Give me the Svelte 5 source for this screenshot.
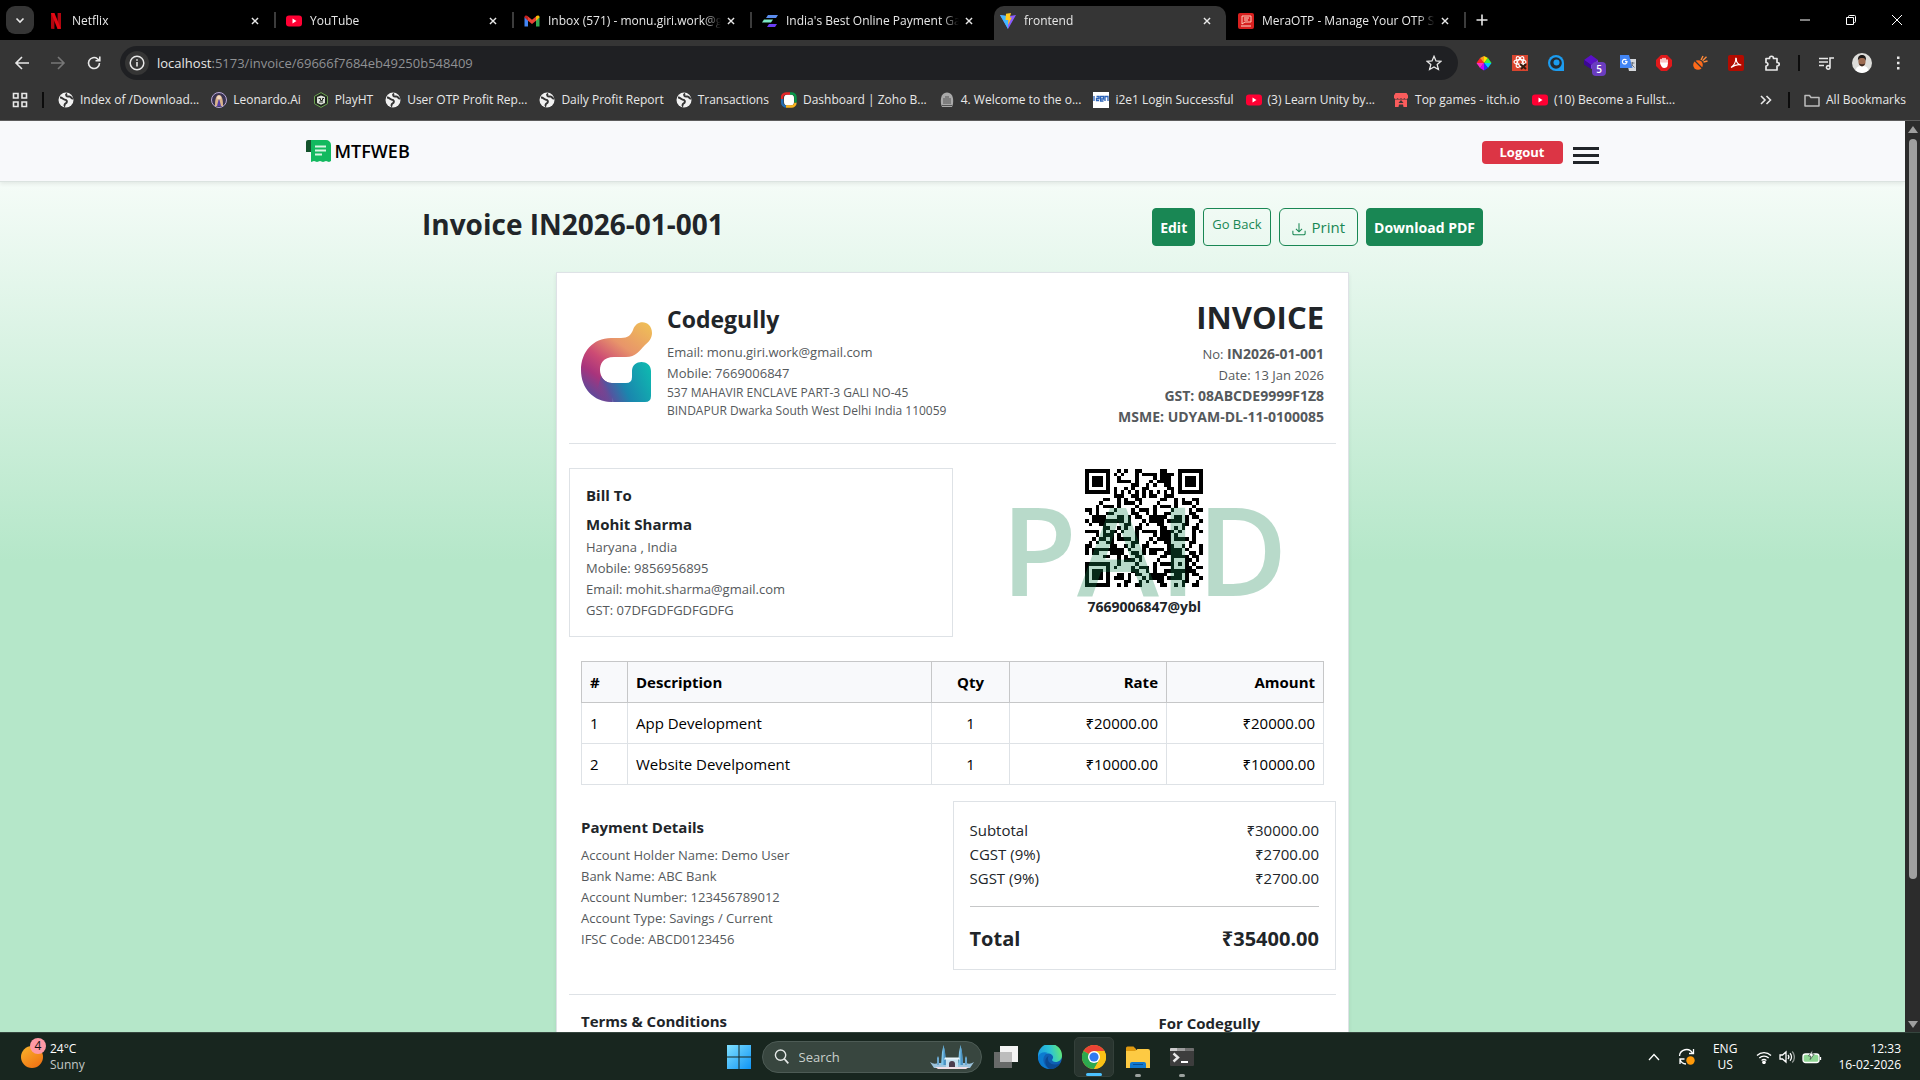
<script>
  const tabs = [
    { icon: 'netflix', title: 'Netflix' },
    { icon: 'youtube', title: 'YouTube' },
    { icon: 'gmail', title: 'Inbox (571) - monu.giri.work@gmail.com' },
    { icon: 'bars', title: "India's Best Online Payment Gateway" },
    { icon: 'vite', title: 'frontend', active: true },
    { icon: 'otp', title: 'MeraOTP - Manage Your OTP Services' },
  ];

  const bookmarks = [
    { icon: 'globe', title: 'Index of /Download...' },
    { icon: 'leonardo', title: 'Leonardo.Ai' },
    { icon: 'playht', title: 'PlayHT' },
    { icon: 'globe', title: 'User OTP Profit Rep...' },
    { icon: 'globe', title: 'Daily Profit Report' },
    { icon: 'globe', title: 'Transactions' },
    { icon: 'zoho', title: 'Dashboard | Zoho B...' },
    { icon: 'emblem', title: '4. Welcome to the o...' },
    { icon: 'i2e1', title: 'i2e1 Login Successful' },
    { icon: 'youtube', title: '(3) Learn Unity by...', wide: true },
    { icon: 'itch', title: 'Top games - itch.io' },
    { icon: 'youtube', title: '(10) Become a Fullst...' },
  ];

  const extensions = ['wheel', 'react', 'swirl', 'cube', 'translate', 'stop', 'plug', 'pdf', 'puzzle'];

  const items = [
    { name: 'App Development', qty: 1, rate: 20000 },
    { name: 'Website Develpoment', qty: 1, rate: 10000 },
  ];
  const money = (n) => '₹' + n.toFixed(2);
  const subtotal = items.reduce((sum, i) => sum + i.qty * i.rate, 0);
  const tax = subtotal * 0.09;

  const size = 33;
  // Position markers, alignment marker and timing tracks of a version 4 code; -1 marks the data area.
  function fixedModule(x, y) {
    const spots = [[0, 0], [size - 7, 0], [0, size - 7]];
    for (const [fx, fy] of spots) {
      const dx = x - fx, dy = y - fy;
      if (dx >= -1 && dx <= 7 && dy >= -1 && dy <= 7) {
        if (dx < 0 || dx > 6 || dy < 0 || dy > 6) return 0;
        const ring = Math.max(Math.abs(dx - 3), Math.abs(dy - 3));
        return ring === 2 ? 0 : 1;
      }
    }
    const align = Math.max(Math.abs(x - 26), Math.abs(y - 26));
    if (align <= 2) return align === 1 ? 0 : 1;
    if (x === 6 || y === 6) return (x + y + 1) % 2;
    return -1;
  }
  let qrPath = '';
  for (let y = 0; y < size; y++)
    for (let x = 0; x < size; x++) {
      const f = fixedModule(x, y);
      const v = f >= 0 ? f : ((x * 7919 + y * 104729 + x * y * 31 + ((x * x * 13 + y * y * 17) >> 2)) >> 2) & 1;
      if (v) qrPath += `M${x} ${y}h1v1h-1z`;
    }
</script>

{#snippet icon(name)}
  <svg class="ico" viewBox="0 0 16 16" aria-hidden="true">
    {#if name === 'netflix'}
      <path d="M3 0h3.4v16L3 15.8zM9.6 0H13v15.800L9.600 16z" fill="#b1060f" />
      <path d="M3 0h3.400L13 15.800 9.600 16z" fill="#e50914" />
    {:else if name === 'youtube'}
      <rect y="2.500" width="16" height="11" rx="3" fill="#f03" />
      <path d="M6.500 5.500v5L10.500 8z" fill="#fff" />
    {:else if name === 'gmail'}
      <path d="M.5 4v9.500H4V7z" fill="#4285f4" />
      <path d="M12 7v6.500h3.500V4z" fill="#34a853" />
      <path d="M4 3.500v4.300L8 11l4-3.200V3.500L8 6.800z" fill="#ea4335" />
      <path d="M.5 4.500V4C.5 2.500 2.500 2 4 3.300v4.500z" fill="#c5221f" />
      <path d="M15.500 4.500V4c0-1.500-2-2-3.500-.7v4.500z" fill="#fbbc04" />
    {:else if name === 'bars'}
      <path d="M6 2h10l-2 3H4z" fill="#5b8def" />
      <path d="M2 6.500h9l-2 3H0z" fill="#7ce8c4" />
      <path d="M7 11h8l-2 3H5z" fill="#6a3df5" />
    {:else if name === 'vite'}
      <path d="M0 2l8 14 8-14-6 1H6z" fill="#8a5cff" />
      <path d="M0 2l8 14V3z" fill="#41b8ff" />
      <path d="M6 .8L11 0 9.800 4.500h2L8 12l.3-5H5.500z" fill="#ffc81e" />
    {:else if name === 'otp'}
      <rect width="16" height="16" rx="2" fill="#d8201f" />
      <path d="M4 3h9v6H7l-3 2z" fill="none" stroke="#ffc9b8" />
      <path d="M6 5h5M6 7h4M3 13h10" stroke="#ffd9cc" />
    {:else if name === 'globe'}
      <circle cx="8" cy="8" r="7.500" fill="#f1f1f1" />
      <path d="M2 5.500c3 0 3 2.500 6 2.500 1.500 1 1 3-.5 3.500S7 14 6 14.500M9 1.500C7 3 8.500 5 11 4.500s2 2.500 4 2" fill="none" stroke="#353535" stroke-width="2" />
    {:else if name === 'leonardo'}
      <circle cx="8" cy="8" r="7.500" fill="#3a3350" stroke="#b9a7d8" />
      <path d="M4 14c0-7 1-11 4-11s4 4 4 11z" fill="#d9b48c" />
      <path d="M6 14l2-8 2 8z" fill="#5a3fa8" />
      <circle cx="8" cy="5.500" r="2" fill="#f3d9c0" />
    {:else if name === 'playht'}
      <path d="M8 .6l6.500 3.700v7.400L8 15.400 1.500 11.700V4.300z" fill="#20261f" stroke="#6ea553" />
      <path d="M4 5l4-1.500L12 5v6l-4 1.800L4 11z" fill="#d9ddd6" />
      <path d="M5.500 6.500h2v2h2v-2h1.500M6 10h4" stroke="#20261f" fill="none" />
    {:else if name === 'zoho'}
      <rect x="3" y="2.500" width="10" height="11" rx="3.500" fill="#fff" />
      <path d="M9 1.500H5a4 4 0 0 0-4 4V7" fill="none" stroke="#e42527" stroke-width="2.400" />
      <path d="M1.200 7v3.500a4 4 0 0 0 3.800 4" fill="none" stroke="#226db4" stroke-width="2.400" />
      <path d="M5 14.500h5a4 4 0 0 0 4.500-4" fill="none" stroke="#f9b21d" stroke-width="2.400" />
      <path d="M9 1.500h2a3.500 3.500 0 0 1 3.500 4v5" fill="none" stroke="#089949" stroke-width="2.400" />
    {:else if name === 'emblem'}
      <path d="M2 12C1 4 4 .5 8 .5S15 4 14 12l-1 3H3z" fill="#a9a9a9" />
      <path d="M5 12V6m2 6V4m2 8V4m2 8V6M3 13.500h10" stroke="#555" />
    {:else if name === 'i2e1'}
      <path d="M0 0h16v16H0z" fill="#fff" />
      <path d="M1 4v5M3.500 4.500h2.500v2H3.500v2H6M7.500 7h3V4.500h-3V9h3M12 9V4.500h3V9" fill="none" stroke="#2a62b8" stroke-width="1.300" />
    {:else if name === 'itch'}
      <path d="M1 3.500L2.500 1h11L15 3.500V6c-1 1.500-3 1.200-3.500 0-.8 1.400-2.800 1.400-3.500 0-.7 1.400-2.700 1.400-3.500 0C4 7.200 2 7.500 1 6z" fill="#fa5c5c" />
      <path d="M2 7.500h12V15h-3.500L10 12.500H6L5.500 15H2z" fill="#fa5c5c" />
      <path d="M8 8l2.500 3h-5z" fill="#353535" />
    {:else if name === 'wheel'}
      <path d="M8 8V1l4 2z" fill="#ffe600" /><path d="M8 8l4-5 3.500 5z" fill="#3df03d" />
      <path d="M8 8h7.500L12 13z" fill="#00c8ff" /><path d="M8 8l4 5-4 2.500z" fill="#2430ff" />
      <path d="M8 8v7.500L4 13z" fill="#c800ff" /><path d="M8 8l-4 5L.5 8z" fill="#ff2ac8" />
      <path d="M8 8H.5L4 3z" fill="#ff2626" /><path d="M8 8L4 3l4-2z" fill="#ff9a1f" />
    {:else if name === 'react'}
      <path d="M0 0h16v16H0z" fill="#d9452f" />
      <g fill="none" stroke="#fff" stroke-width="1.200"><ellipse cx="8" cy="7" rx="6" ry="2.400" /><ellipse cx="8" cy="7" rx="6" ry="2.400" transform="rotate(60 8 7)" /><ellipse cx="8" cy="7" rx="6" ry="2.400" transform="rotate(120 8 7)" /></g>
      <path d="M8 9l6 5M9 14l5-5" stroke="#30190f" stroke-width="2" />
    {:else if name === 'swirl'}
      <path d="M8 0a8 8 0 1 0 0 16h8V8a8 8 0 0 0-8-8z" fill="#1c9cf0" />
      <circle cx="8" cy="8" r="5.800" fill="#262a30" />
      <circle cx="8.500" cy="7.500" r="3" fill="#1c9cf0" />
    {:else if name === 'cube'}
      <path d="M7 0l7 5-7 5-7-5z" fill="#5a10c8" /><path d="M0 5l7 5v4L0 9.500z" fill="#3b0794" /><path d="M14 5l-7 5v4l7-4z" fill="#7a3ae0" />
    {:else if name === 'translate'}
      <path d="M6 4h10v12H9z" fill="#d5d8dc" />
      <path d="M0 0h9l3.500 13H0z" fill="#4285f4" />
      <path d="M6.500 5.200A2.300 2.300 0 1 0 7 6.700H5" fill="none" stroke="#fff" stroke-width="1.200" />
      <path d="M10.500 8h4M12.500 7v1c0 2-1 3.500-2 4M11.500 9.500l3 3" stroke="#6b7480" fill="none" />
    {:else if name === 'stop'}
      <path d="M5 0h6l5 5v6l-5 5H5l-5-5V5z" fill="#e0191b" />
      <path d="M5 8V4.500m2 3v-4m2 4v-4m2 5V5" stroke="#fff" stroke-width="1.500" stroke-linecap="round" />
      <path d="M4.300 7.500h7.400V10c0 2-1.500 3-3.500 3S5.500 11.500 4.300 9z" fill="#fff" />
    {:else if name === 'plug'}
      <circle cx="6" cy="10" r="4.800" fill="#ff6a1a" />
      <path d="M2 5l9 9" stroke="#353535" stroke-width="1.300" />
      <path d="M9 5l2-4M11.500 7l4-1M10.500 5.800l4-4" stroke="#ff8a3a" stroke-width="1.400" />
    {:else if name === 'pdf'}
      <rect width="16" height="16" rx="2" fill="#b30b00" />
      <path d="M3 12.500c3-2 5-6 4.700-8.500-.2-1.500 1-1 .7.500-.4 3 2.600 5.500 4.800 5.500-2.500-.8-6.500 0-10.200 2.500z" fill="none" stroke="#fff" stroke-width="1.100" />
    {:else if name === 'puzzle'}
      <path d="M2 3.500h3.500c0-3 4-3 4 0H13v4c3 0 3 3.500 0 3.500v4H2v-4c2.500 0 2.500-3.500 0-3.500z" fill="none" stroke="#e8e8e8" stroke-width="1.700" stroke-linejoin="round" />
    {/if}
  </svg>
{/snippet}

{#snippet stroke(d)}
  <svg class="ico" viewBox="0 0 16 16" aria-hidden="true"><path {d} fill="none" stroke="currentColor" stroke-width="1.600" /></svg>
{/snippet}

<div class="desktop">
  <header class="browser">
    <div class="tabstrip">
      <button class="tabsearch" aria-label="Search tabs">{@render stroke('M4.500 6.500L8 10l3.500-3.500')}</button>
      {#each tabs as tab}
        <div class="tab" class:active={tab.active}>
          {@render icon(tab.icon)}
          <span class="title">{tab.title}</span>
          <button class="x" aria-label="Close tab">{@render stroke('M4.500 4.500l7 7M11.500 4.500l-7 7')}</button>
        </div>
      {/each}
      <button class="newtab" aria-label="New tab">{@render stroke('M8 2.500v11M2.500 8h11')}</button>
      <div class="winctl">
        <button aria-label="Minimize"><svg viewBox="0 0 10 10"><path d="M0 5h10" /></svg></button>
        <button aria-label="Restore"><svg viewBox="0 0 10 10"><path d="M.5 2.500h7v7h-7zM2.500 2.500V1.500a1 1 0 0 1 1-1h5a1 1 0 0 1 1 1v5a1 1 0 0 1-1 1h-1" /></svg></button>
        <button aria-label="Close"><svg viewBox="0 0 10 10"><path d="M0 0l10 10M10 0L0 10" /></svg></button>
      </div>
    </div>

    <div class="toolbar">
      <button class="nav" aria-label="Back">{@render stroke('M15 8H2.500M8 2L2 8l6 6')}</button>
      <button class="nav dim" aria-label="Forward">{@render stroke('M1 8h12.500M8 2l6 6-6 6')}</button>
      <button class="nav" aria-label="Reload">{@render stroke('M13.500 8A5.500 5.500 0 1 1 11.500 3.800L13.500 5.500M13.800 1.500v4.300H9.500')}</button>
      <div class="omnibox">
        <button class="info" aria-label="Site information">
          <svg class="ico" viewBox="0 0 16 16"><circle cx="8" cy="8" r="6.800" fill="none" stroke="currentColor" stroke-width="1.500" /><path d="M8 7v4.500M8 4.200v1.600" stroke="currentColor" stroke-width="1.600" /></svg>
        </button>
        <span class="url"><b>localhost</b>:5173/invoice/69666f7684eb49250b548409</span>
        <button class="nav" aria-label="Bookmark"><svg class="ico" viewBox="0 0 16 16"><path d="M8 1.300l2 4.600 5 .4-3.800 3.300 1.200 4.900L8 11.900l-4.400 2.600 1.200-4.900L1 6.300l5-.4z" fill="none" stroke="currentColor" stroke-width="1.300" /></svg></button>
      </div>
      <div class="exts">
        {#each extensions as ext}
          <button class="ext" aria-label={ext}>{@render icon(ext)}{#if ext === 'cube'}<span class="badge">5</span>{/if}</button>
        {/each}
      </div>
      <span class="sep"></span>
      <button class="ext" aria-label="Media">{@render stroke('M1 3.500h9M1 7h9M1 10.500h5M12 12V3h4M12 12a1.800 1.800 0 1 1-3.500 0 1.800 1.800 0 0 1 3.500 0z')}</button>
      <button class="ext avatar" aria-label="Profile">
        <svg viewBox="0 0 20 20"><circle cx="10" cy="10" r="10" fill="#dcdcd9" /><path d="M3.500 17.500C4.500 13.500 7 13 10 13s5.500.5 6.500 4.500A10 10 0 0 1 3.500 17.500z" fill="#fff" /><ellipse cx="10" cy="8.500" rx="3.600" ry="5" fill="#9c6a50" /><path d="M6 8C5.500 3.500 7.500 2 10 2s4.500 1.500 4 6c-1-3-2-3-4-3s-3 0-4 3z" fill="#1f1a18" /><path d="M7 10.500c1 3.500 5 3.500 6 0-1 1-5 1-6 0z" fill="#3a2a22" /></svg>
      </button>
      <button class="ext" aria-label="Menu"><svg class="ico" viewBox="0 0 16 16"><path d="M7 1.500h2.500V4H7zM7 6.800h2.500v2.500H7zM7 12h2.500v2.500H7z" fill="currentColor" /></svg></button>
    </div>

    <nav class="bookmarks">
      <button class="apps" aria-label="Apps">{@render stroke('M1.500 1.500h4.500v4.500H1.500zM10 1.500h4.500v4.500H10zM1.500 10h4.500v4.500H1.500zM10 10h4.500v4.500H10z')}</button>
      <span class="sep"></span>
      {#each bookmarks as mark}
        <a href="#top" class:wide={mark.wide}>{@render icon(mark.icon)}{mark.title}</a>
      {/each}
      <span class="grow"></span>
      <button class="apps" aria-label="More bookmarks">{@render stroke('M3 4l4 4-4 4M8.500 4l4 4-4 4')}</button>
      <span class="sep"></span>
      <a href="#top" class="all">
        <svg class="ico" viewBox="0 0 16 16"><path d="M1 3.500h4.500l1.500 2h8V14H1z" fill="none" stroke="#bdbdbd" stroke-width="1.500" stroke-linejoin="round" /></svg>All Bookmarks
      </a>
    </nav>
  </header>

  <div class="viewport">
    <div class="page">
      <nav class="sitebar">
        <div class="container">
          <a class="brand" href="#home">
            <svg viewBox="0 0 25 22" aria-hidden="true"><path d="M0 2a2 2 0 0 1 2-2h5v12H0z" fill="#14532d" /><path d="M5 0h15a5 5 0 0 1 5 5v16l-2 1-3-1-3 1-3-1-3 1-3-1-3 1z" fill="#12b95f" /><path d="M9 6.500h11M9 10.500h11M9 14.500h7" stroke="#d7f5e3" stroke-width="2" /></svg>
            MTFWEB
          </a>
          <button class="logout">Logout</button>
          <button class="burger" aria-label="Menu"><i></i><i></i><i></i></button>
        </div>
      </nav>

      <main>
        <div class="titlebar">
          <h1>Invoice IN2026-01-001</h1>
          <div class="actions">
            <button class="btn solid">Edit</button>
            <button class="btn back">Go Back</button>
            <button class="btn print">
              <svg viewBox="0 0 16 16" aria-hidden="true"><path d="M1 10v3a1.500 1.500 0 0 0 1.500 1.500h11A1.500 1.500 0 0 0 15 13v-3M8 1.500V11M4.500 7.800L8 11.200l3.500-3.400" fill="none" stroke="currentColor" stroke-width="1.200" /></svg>
              Print
            </button>
            <button class="btn solid">Download PDF</button>
          </div>
        </div>

        <article class="sheet">
          <header class="head">
            <svg class="logo" viewBox="0 0 71 80" aria-hidden="true">
              <defs>
                <linearGradient id="warm" x1="0.900" y1="0" x2="0.250" y2="1">
                  <stop offset="0" stop-color="#efbd57" /><stop offset="0.350" stop-color="#e8956a" /><stop offset="0.600" stop-color="#cc4b74" /><stop offset="0.780" stop-color="#a8347c" /><stop offset="1" stop-color="#5a4a9c" />
                </linearGradient>
                <linearGradient id="cool" gradientUnits="userSpaceOnUse" x1="14" y1="68" x2="68" y2="44">
                  <stop offset="0" stop-color="#7d3f90" stop-opacity="0" /><stop offset="0.220" stop-color="#5355a0" /><stop offset="0.480" stop-color="#1a86ae" /><stop offset="1" stop-color="#0fb8b0" />
                </linearGradient>
              </defs>
              <path d="M30 16h10c7 0 10-3 12-8 4-12 19-9 19 3 0 5-3 9-7 12-6 6-9 12-19 12H33C22 35 19 42 19 48s4 13 12 13v19C12 80 0 66 0 48S12 16 30 16z" fill="url(#warm)" />
              <path d="M14 76C20 79 25 80 31 80h33q6 0 6-6V49c0-12-19-12-19 0v6q0 6-6 6H31C26 61 22 58 20 54z" fill="url(#cool)" />
            </svg>
            <div class="from">
              <h2>Codegully</h2>
              <p>Email: monu.giri.work@gmail.com</p>
              <p>Mobile: 7669006847</p>
              <p class="small">537 MAHAVIR ENCLAVE PART-3 GALI NO-45</p>
              <p class="small">BINDAPUR Dwarka South West Delhi India 110059</p>
            </div>
            <div class="meta">
              <h2>INVOICE</h2>
              <p>No: <b>IN2026-01-001</b></p>
              <p>Date: 13 Jan 2026</p>
              <p><b>GST: 08ABCDE9999F1Z8</b></p>
              <p><b>MSME: UDYAM-DL-11-0100085</b></p>
            </div>
          </header>

          <section class="parties">
            <div class="billto">
              <h3>Bill To</h3>
              <h3 class="name">Mohit Sharma</h3>
              <p>Haryana , India</p>
              <p>Mobile: 9856956895</p>
              <p>Email: mohit.sharma@gmail.com</p>
              <p>GST: 07DFGDFGDFGDFG</p>
            </div>
            <div class="pay">
              <svg class="qr" viewBox="0 0 33 33" shape-rendering="crispEdges" role="img" aria-label="Payment QR code"><path d={qrPath} /></svg>
              <strong>7669006847@ybl</strong>
              <span class="paid">PAID</span>
            </div>
          </section>

          <table>
            <thead>
              <tr><th class="no">#</th><th>Description</th><th class="qty">Qty</th><th class="num">Rate</th><th class="num">Amount</th></tr>
            </thead>
            <tbody>
              {#each items as item, i}
                <tr><td>{i + 1}</td><td>{item.name}</td><td class="qty">{item.qty}</td><td class="num">{money(item.rate)}</td><td class="num">{money(item.qty * item.rate)}</td></tr>
              {/each}
            </tbody>
          </table>

          <section class="sums">
            <div class="bank">
              <h3>Payment Details</h3>
              <p>Account Holder Name: Demo User</p>
              <p>Bank Name: ABC Bank</p>
              <p>Account Number: 123456789012</p>
              <p>Account Type: Savings / Current</p>
              <p>IFSC Code: ABCD0123456</p>
            </div>
            <div class="totals">
              <div><span>Subtotal</span><span>{money(subtotal)}</span></div>
              <div><span>CGST (9%)</span><span>{money(tax)}</span></div>
              <div><span>SGST (9%)</span><span>{money(tax)}</span></div>
              <hr />
              <div class="total"><span>Total</span><span>{money(subtotal + 2 * tax)}</span></div>
            </div>
          </section>

          <footer class="foot">
            <h3>Terms &amp; Conditions</h3>
            <h3 class="sign">For Codegully</h3>
          </footer>
        </article>
      </main>
    </div>
    <div class="scroll" aria-hidden="true"><i class="up"></i><i class="thumb"></i><i class="down"></i></div>
  </div>

  <footer class="taskbar">
    <div class="weather">
      <div class="sun"><span>4</span></div>
      <div><div>24°C</div><div class="soft">Sunny</div></div>
    </div>
    <div class="dock">
      <button class="app start" aria-label="Start">
        <svg viewBox="0 0 24 24"><defs><linearGradient id="win" x1="0" y1="0" x2="1" y2="1"><stop offset="0" stop-color="#7fe0ff" /><stop offset="1" stop-color="#0f94f5" /></linearGradient></defs><path d="M0 0h11.500v11.500H0zM12.500 0H24v11.500H12.500zM0 12.500h11.500V24H0zM12.500 12.500H24V24H12.500z" fill="url(#win)" /></svg>
      </button>
      <label class="search">
        <svg viewBox="0 0 16 16"><circle cx="7" cy="6.500" r="5.500" fill="none" stroke="#e6e9e8" stroke-width="1.500" /><path d="M11 10.500l4.300 4.800" stroke="#e6e9e8" stroke-width="1.700" /></svg>
        <input type="text" placeholder="Search" aria-label="Search" />
        <svg class="castle" viewBox="0 0 46 24"><path d="M1 17q4 3 8 1h28q4 2 8-1l-4 6H5z" fill="#9cc3dc" /><path d="M6 22h34l-3 2H9z" fill="#f0dfe6" /><path d="M12 20L13 7l1.500-7L16 7l1 13zM29 20l1-13 1.500-7L33 7l1 13z" fill="#7fc4e8" /><path d="M14.500 0L16 7l1 13h-2.500zM31.500 0L33 7l1 13h-2.500z" fill="#4b93c4" /><path d="M8 20v-7l1-2 1 2v7M36 20v-7l1-2 1 2v7" fill="#6aa7cf" /><path d="M17 14h12v8H17z" fill="#c5dfee" /><path d="M20 22v-3a3 3 0 0 1 6 0v3z" fill="#4c3c4e" /><path d="M16 12.500h14l1 2H15z" fill="#eaf6fc" /></svg>
      </label>
      <button class="app" aria-label="Task view"><svg viewBox="0 0 24 24"><path d="M6 1h18v16H6z" fill="#f4f4f4" /><path d="M0 7h18v16H0z" fill="#777" fill-opacity=".85" /><path d="M6 7h12v10H6z" fill="#bdbdbd" /></svg></button>
      <button class="app" aria-label="Edge">
        <svg viewBox="0 0 24 24"><defs><linearGradient id="e1" x1="0" y1="0.500" x2="1" y2="0.300"><stop offset="0" stop-color="#1b9de2" /><stop offset="0.500" stop-color="#2cc3d5" /><stop offset="1" stop-color="#66eb6e" /></linearGradient></defs><circle cx="12" cy="12" r="12" fill="#0f5fb4" /><path d="M0 11A12 12 0 0 1 24 10.500c0 4-3 6.500-6.500 6.500-3 0-4-1.500-3-3 1.500-2 0-5-3.500-5.500C6 8 1 11 0 15z" fill="url(#e1)" /><path d="M0 12c1-4 6-6 10-4-3 1-5 4-4.500 8S9 23 12 24C5 24 0 19 0 12z" fill="#0c7bd0" /><path d="M10.500 11c-2 4 1 8.500 6 8.500 2 0 4-.5 5.500-1.500-2 4-6 6-10 6C6 21 6 13 10.500 11z" fill="#0b4a94" /></svg>
      </button>
      <button class="app current" aria-label="Chrome">
        <svg viewBox="0 0 24 24"><circle cx="12" cy="12" r="12" fill="#fbc116" /><path d="M12 12L1.600 6A12 12 0 0 1 22.400 6z" fill="#ea4335" /><path d="M1.600 6L12 12 17.200 15 12 24A12 12 0 0 1 1.600 6z" fill="#2da94f" /><path d="M12 6h10.400A12 12 0 0 1 12 24l5.200-9z" fill="#fbc116" /><circle cx="12" cy="12" r="6" fill="#fff" /><circle cx="12" cy="12" r="4.600" fill="#2f79f0" /></svg>
      </button>
      <button class="app open" aria-label="Files">
        <svg viewBox="0 0 24 24"><path d="M0 3a1.500 1.500 0 0 1 1.500-1.500h6L10 4v5H0z" fill="#e09a10" /><path d="M0 6h9l2.500-2H22a2 2 0 0 1 2 2v17H0z" fill="#fdca43" /><path d="M4 23v-4a2 2 0 0 1 2-2h12a2 2 0 0 1 2 2v4z" fill="#1279cf" /><path d="M7 19.500h10" stroke="#0b4f92" /></svg>
      </button>
      <button class="app open" aria-label="Terminal">
        <svg viewBox="0 0 24 24"><rect y="3" width="24" height="18" rx="1" fill="#3d3d3d" /><path d="M0 4a1 1 0 0 1 1-1h6v3H0z" fill="#ccc" /><path d="M7 3h8v3H7z" fill="#9c9c9c" /><path d="M15 3h8a1 1 0 0 1 1 1v2h-9z" fill="#6f6f6f" /><path d="M3.500 8.500l4.500 4-4.500 4" fill="none" stroke="#e8e8e8" stroke-width="2.400" /><path d="M11 17h7" stroke="#fff" stroke-width="2" /></svg>
      </button>
    </div>
    <div class="tray">
      <svg class="chev" viewBox="0 0 12 8"><path d="M1 7l5-5.500L11 7" /></svg>
      <svg class="sync" viewBox="0 0 18 18"><path d="M1.500 8A7 7 0 0 1 14.500 5M15.500 1v4.500H11M2 16v-5h4.500M2 11.500A7 7 0 0 0 8 16" /><circle cx="12.500" cy="12.500" r="4.200" /></svg>
      <div class="lang">ENG<br />US</div>
      <div class="status">
        <svg viewBox="0 0 16 14"><path d="M1 5.500a10 10 0 0 1 14 0M3.300 8a6.800 6.800 0 0 1 9.400 0M5.600 10.500a3.600 3.600 0 0 1 4.800 0" /><circle cx="8" cy="12.300" r="1.200" fill="#fff" /></svg>
        <svg viewBox="0 0 16 14"><path d="M1 5h2.500L7 2v10L3.500 9H1zM9 5a3 3 0 0 1 0 4M11 3.200a5.500 5.500 0 0 1 0 7.600" /><path d="M13.200 1.500a8 8 0 0 1 0 11" opacity=".5" /></svg>
        <svg class="batt" viewBox="0 0 20 14"><rect x="1" y="4" width="16" height="8.500" rx="2.500" fill="#8fd694" /><path d="M18.500 7v3" /><path d="M10.500 0L6.500 6h2.300l-.6 3.500 4-5.500H10z" fill="#fff" stroke="#1a2721" stroke-width=".6" /></svg>
      </div>
      <div class="clock">12:33<br />16-02-2026</div>
    </div>
  </footer>
</div>

<style>
  :global(body) { margin: 0; background: #000; }
  .desktop { height: 100vh; display: flex; flex-direction: column; overflow: hidden; font-family: "Open Sans", "Noto Sans", sans-serif; font-size: 15px; color: #212529; }
  .desktop * { box-sizing: border-box; }
  button { font: inherit; color: inherit; background: none; border: 0; padding: 0; }
  a { color: inherit; text-decoration: none; }
  h1, h2, h3, p { margin: 0; }
  svg { display: block; flex: none; }
  .ico { width: 16px; height: 16px; }

  .browser { color: #e8e8e8; background: #353535; font-size: 12px; border-bottom: 1px solid #5c5c5c; }
  .tabstrip { height: 40px; background: #000; display: flex; align-items: flex-end; padding-left: 6px; }
  .tabsearch { width: 28px; height: 28px; margin: 0 8px 6px 0; border-radius: 9px; background: #353535; display: grid; place-items: center; }
  .tab { width: 238px; height: 34px; padding: 0 18px 5px 6px; display: flex; align-items: center; position: relative; }
  .tab::after { content: ""; width: 2px; height: 16px; background: #3c3c3c; position: absolute; right: 4px; top: 6px; }
  .tab.active { background: #353535; border-radius: 10px 10px 0 0; width: 232px; margin-right: 6px; padding-right: 12px; }
  .tab.active::after, .tab:has(+ .active)::after { display: none; }
  .title { flex: 1; min-width: 0; margin: 0 3px 0 8px; overflow: hidden; white-space: nowrap; mask-image: linear-gradient(to right, #000 90%, transparent); }
  .x, .newtab { display: grid; place-items: center; }
  .x .ico { width: 14px; height: 14px; }
  .newtab { height: 32px; width: 24px; margin-bottom: 4px; }
  .winctl { margin-left: auto; height: 40px; display: flex; }
  .winctl button { width: 46px; display: grid; place-items: center; }
  .winctl svg { width: 10px; height: 10px; fill: none; stroke: #fff; overflow: visible; }

  .toolbar { height: 46px; display: flex; align-items: center; padding: 0 4px; }
  .nav { width: 36px; height: 34px; display: grid; place-items: center; }
  .dim { color: #777; }
  .omnibox { flex: 1; height: 34px; margin: 0 8px; border-radius: 17px; background: #1f2023; display: flex; align-items: center; padding: 0 6px 0 5px; }
  .info { width: 24px; height: 24px; border-radius: 12px; background: #353535; display: grid; place-items: center; }
  .url { flex: 1; margin-left: 8px; font-size: 13px; color: #8f9194; }
  .url b { font-weight: 400; color: #e8e8e8; }
  .exts { display: flex; }
  .ext { width: 36px; height: 34px; display: grid; place-items: center; position: relative; }
  .badge { position: absolute; right: 4px; bottom: 4px; width: 14px; height: 14px; line-height: 14px; border-radius: 4px; background: #6a3dbf; color: #fff; font-size: 10px; font-weight: 600; }
  .sep { width: 2px; height: 16px; background: #0c0c0c; margin: 0 8px; }
  .avatar svg { width: 20px; height: 20px; }
  .bookmarks { height: 34px; display: flex; align-items: center; padding: 0 14px 7px 12px; }
  .bookmarks a { display: flex; align-items: center; gap: 6px; margin-right: 12px; white-space: nowrap; }
  .bookmarks a.wide { margin-right: 18px; }
  .bookmarks .sep { margin: 0 14px; }
  .bookmarks a.all { margin: 0; gap: 6px; }
  .grow { flex: 1; }

  .viewport { flex: 1; min-height: 0; display: flex; }
  .page { flex: 1; min-width: 0; overflow: hidden; background: linear-gradient(to bottom, #fff 0, #b5e7c9 440px); }
  .scroll { width: 15px; background: #2c2c2c; display: flex; flex-direction: column; align-items: center; padding: 5px 0 4px; }
  .up, .down { border: 5px solid transparent; }
  .up { border-top: 0; border-bottom: 7px solid #9f9f9f; }
  .down { border-bottom: 0; border-top: 7px solid #9f9f9f; margin-top: auto; }
  .thumb { width: 8px; height: 82%; margin-top: 6px; border-radius: 4px; background: #9f9f9f; }

  .sitebar { height: 61px; background: #f8f9fb; border-bottom: 1px solid #dbe3e0; box-shadow: 0 2px 4px #00000013; }
  .container { max-width: 1320px; height: 60px; margin: 0 auto; padding: 0 14px 0 13px; display: flex; align-items: center; }
  .brand { display: flex; align-items: center; gap: 4px; margin-right: auto; font-size: 18px; font-weight: 600; color: #000; }
  .brand svg { width: 25px; height: 22px; }
  .logout { width: 81px; height: 23px; margin-top: 3px; border-radius: 4px; background: #dc3545; color: #fff; font-size: 13px; font-weight: 700; line-height: 23px; }
  .burger { width: 26px; margin: 8px 0 0 10px; display: flex; flex-direction: column; gap: 4px; }
  .burger i { height: 3px; background: #212529; }

  main { padding: 26px 24px 0; }
  .titlebar { max-width: 1061px; margin: 0 auto; display: flex; justify-content: space-between; align-items: flex-start; }
  h1 { font-size: 28px; line-height: 32px; font-weight: 700; }
  .actions { display: flex; gap: 8px; }
  .btn { height: 38px; padding: 0 8px; border: 1px solid #198754; border-radius: 4px; color: #198754; font-size: 14px; white-space: nowrap; }
  .solid { padding: 0 7px; background: #198754; color: #fff; font-weight: 700; }
  .back { font-size: 13px; padding-bottom: 7px; }
  .print { display: flex; align-items: center; gap: 6px; padding: 0 12px; border-radius: 6px; font-size: 15px; }
  .print svg { width: 14px; height: 14px; margin-top: 3px; }

  .sheet { max-width: 793px; margin: 26px auto 0; padding: 24px 12px 96px; background: #fff; border: 1px solid #dee2e6; box-shadow: 0 2px 4px #00000013; }
  p { font-size: 13px; line-height: 21px; color: #55595c; }
  .head { display: flex; padding: 0 12px 15px; border-bottom: 1px solid #dee2e6; }
  .logo { width: 71px; height: 80px; margin: 25px 15px 0 0; }
  .from { padding-top: 6px; }
  .from h2 { font-size: 23px; line-height: 32px; font-weight: 700; margin-bottom: 7px; }
  p.small { font-size: 12px; line-height: 18px; }
  .meta { margin-left: auto; text-align: right; }
  .meta h2 { font-size: 31px; line-height: 40px; font-weight: 700; margin-bottom: 7px; }
  .meta b { font-size: 14px; line-height: 14px; }
  h3 { font-size: 15px; line-height: 24px; font-weight: 700; }

  .parties { display: grid; grid-template-columns: 1fr 1fr; margin: 24px 0; }
  .billto { height: 169px; padding: 14px 16px; border: 1px solid #dee2e6; }
  .name { margin-top: 5px; margin-bottom: 1px; }
  .pay { position: relative; display: flex; flex-direction: column; align-items: center; }
  .qr { width: 118px; height: 118px; margin: 1px 0 8px; }
  .pay strong { font-size: 14px; line-height: 24px; }
  .paid { position: absolute; inset: 0 0 10px; display: grid; place-items: center; font-size: 124px; font-weight: 600; line-height: 156px; color: #198754; opacity: .3; }

  table { width: calc(100% - 24px); margin: 0 12px; border-collapse: collapse; color: #000; }
  th, td { height: 41px; padding: 0 8px; border: 1px solid #dee2e6; text-align: left; font-weight: 400; }
  th { background: #f8f9fb; border-color: #c6c7c8; font-weight: 700; }
  .no { width: 46px; }
  th.qty { width: 78px; }
  th.num { width: 157px; }
  .qty { text-align: center; }
  .num { text-align: right; }

  .sums { display: grid; grid-template-columns: 1fr 1fr; margin-top: 16px; padding-bottom: 24px; border-bottom: 1px solid #dee2e6; }
  .bank { padding: 14px 12px; }
  .bank h3 { margin-bottom: 6px; }
  .totals { padding: 16px 16px 14px; border: 1px solid #dee2e6; }
  .totals div { display: flex; justify-content: space-between; line-height: 24px; }
  hr { margin: 16px 0; border: 0; border-top: 1px solid #c6c7c8; }
  .totals .total { font-size: 20px; line-height: 32px; font-weight: 700; }
  .foot { display: flex; justify-content: space-between; padding: 14px 76px 0 12px; }
  .sign { margin-top: 2px; }

  .taskbar { height: 48px; display: grid; grid-template-columns: 1fr auto 1fr; align-items: center; background: #18261f; border-top: 1px solid #35453e; color: #fff; font-size: 12px; line-height: 16px; }
  .weather { display: flex; align-items: center; gap: 7px; padding-left: 21px; }
  .soft { color: #c3c8c6; }
  .sun { width: 22px; height: 22px; border-radius: 50%; background: linear-gradient(145deg, #f9b52c, #ef6a10); position: relative; }
  .sun span { position: absolute; left: 9px; top: -8px; width: 16px; height: 16px; border-radius: 50%; background: #ff99a4; color: #111; text-align: center; }
  .dock { display: flex; align-items: center; gap: 4px; padding-left: 8px; }
  .app { width: 40px; height: 40px; border-radius: 5px; display: grid; place-items: center; position: relative; }
  .app svg { width: 24px; height: 24px; }
  .start { width: 24px; margin: 0 7px 0 0; }
  .current { background: #29352f; border: 1px solid #34403a; }
  .current::after, .open::after { content: ""; position: absolute; bottom: 0; width: 16px; height: 3px; border-radius: 2px; background: #4cc2ff; }
  .open::after { width: 6px; background: #9ba19e; }
  .search { width: 220px; height: 32px; padding: 0 6px 0 11px; display: flex; align-items: center; border: 1px solid #4d5b55; border-radius: 16px; background: #38463f; }
  .search svg { width: 15px; height: 15px; }
  .search .castle { width: 46px; height: 24px; }
  .search input { flex: 1; min-width: 0; margin-left: 10px; padding: 0; border: 0; outline: 0; background: none; font: inherit; font-size: 13px; color: #fff; }
  .search input::placeholder { color: #c9cfcc; opacity: 1; }
  .tray { display: flex; align-items: center; justify-content: flex-end; padding-right: 19px; }
  .tray svg { fill: none; stroke: #fff; stroke-width: 1.300; }
  .chev { width: 12px; height: 8px; margin-right: 18px; }
  .sync { width: 18px; height: 18px; margin-right: 17px; }
  .tray .sync circle { fill: #ff9a0a; stroke: none; }
  .lang { text-align: center; margin-right: 19px; }
  .status { display: flex; gap: 7px; margin-right: 16px; }
  .status svg { width: 16px; height: 14px; }
  .status .batt { width: 20px; }
  .clock { text-align: right; }
</style>
